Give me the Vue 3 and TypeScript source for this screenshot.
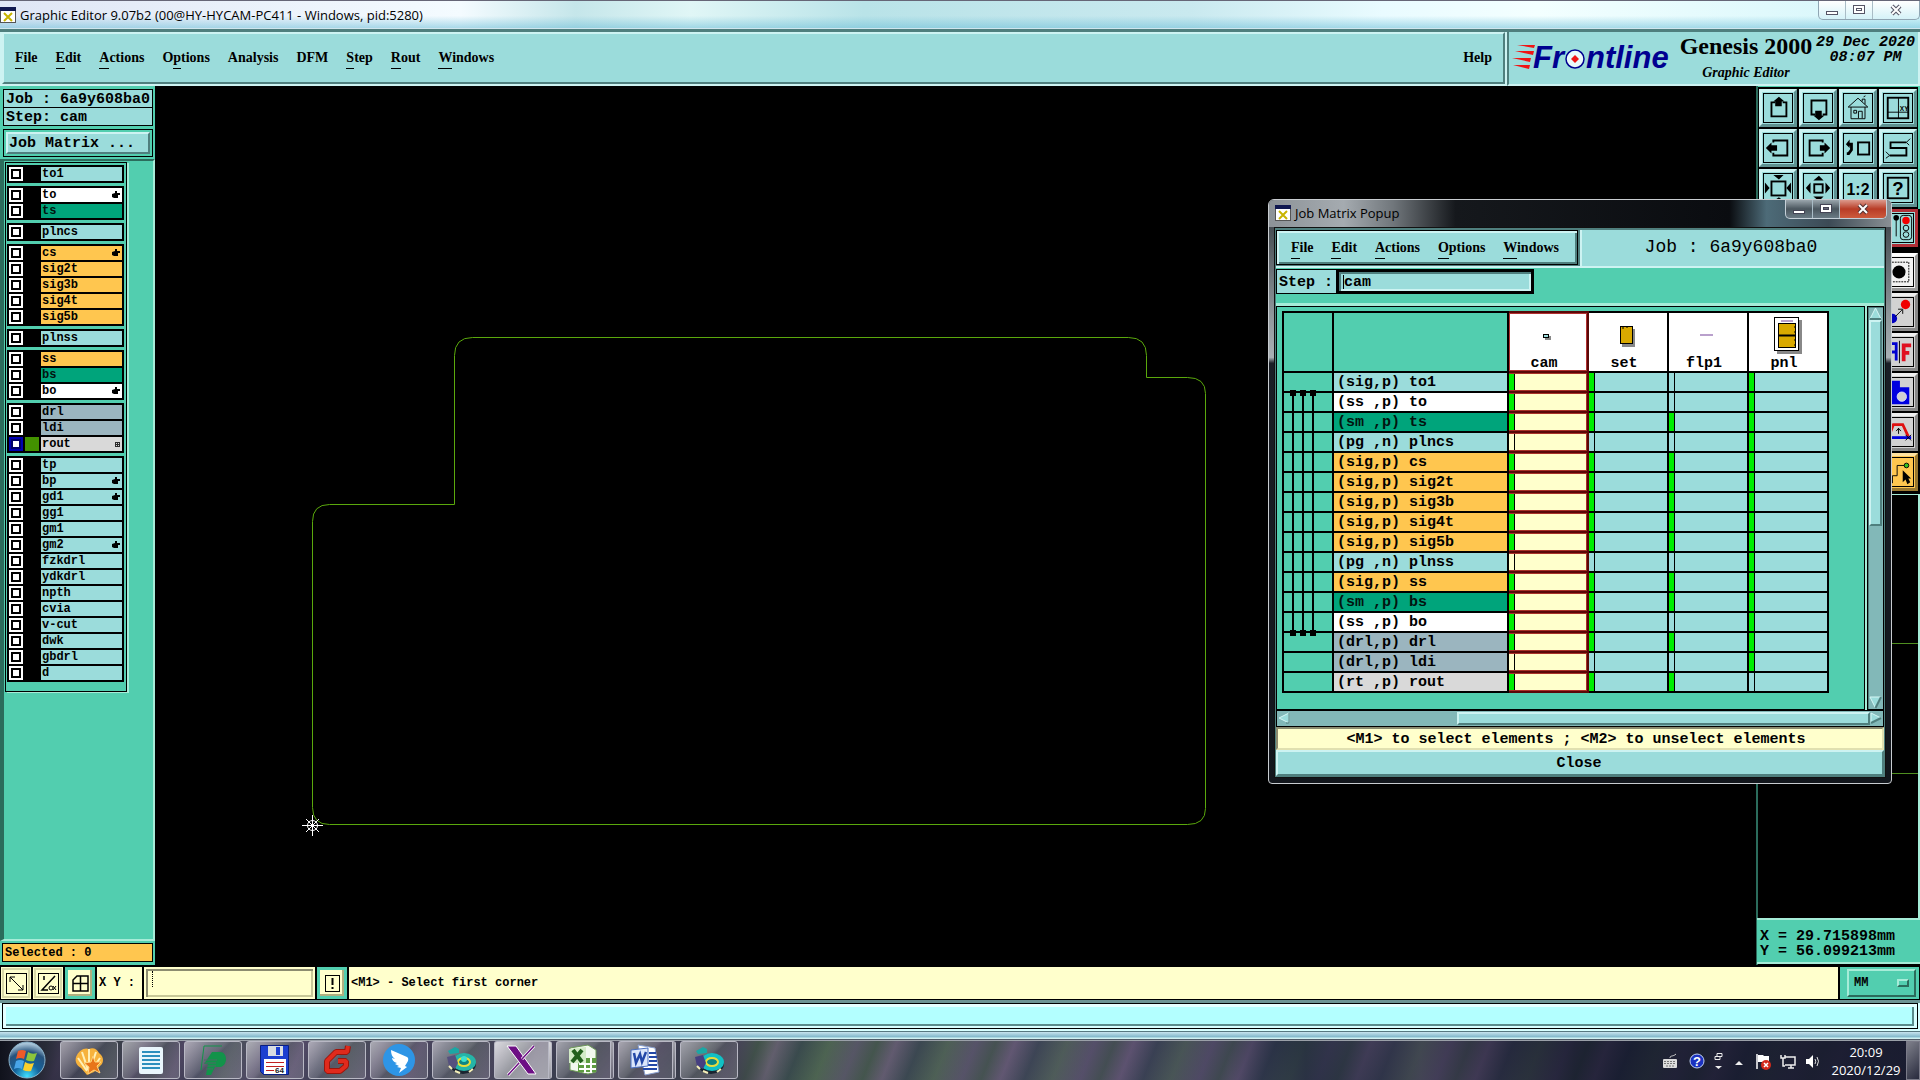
<script setup lang="ts">
import { ref } from 'vue'

interface Layer {
  name: string
  kind: string
  tone: string
  mark?: 'hand' | 'grid'
  active?: boolean
}

const menus = [
  { pre: '', key: 'F', post: 'ile' },
  { pre: '', key: 'E', post: 'dit' },
  { pre: '', key: 'A', post: 'ctions' },
  { pre: 'O', key: 'p', post: 'tions' },
  { pre: 'Analysis', key: '', post: '' },
  { pre: 'DFM', key: '', post: '' },
  { pre: '', key: 'S', post: 'tep' },
  { pre: '', key: 'R', post: 'out' },
  { pre: '', key: 'W', post: 'indows' },
]
const popupMenus = ['File', 'Edit', 'Actions', 'Options', 'Windows']

const groups: Layer[][] = [
  [{ name: 'to1', kind: 'sig,p', tone: 'cyan' }],
  [
    { name: 'to', kind: 'ss ,p', tone: 'white', mark: 'hand' },
    { name: 'ts', kind: 'sm ,p', tone: 'green' },
  ],
  [{ name: 'plncs', kind: 'pg ,n', tone: 'cyan' }],
  [
    { name: 'cs', kind: 'sig,p', tone: 'orange', mark: 'hand' },
    { name: 'sig2t', kind: 'sig,p', tone: 'orange' },
    { name: 'sig3b', kind: 'sig,p', tone: 'orange' },
    { name: 'sig4t', kind: 'sig,p', tone: 'orange' },
    { name: 'sig5b', kind: 'sig,p', tone: 'orange' },
  ],
  [{ name: 'plnss', kind: 'pg ,n', tone: 'cyan' }],
  [
    { name: 'ss', kind: 'sig,p', tone: 'orange' },
    { name: 'bs', kind: 'sm ,p', tone: 'green' },
    { name: 'bo', kind: 'ss ,p', tone: 'white', mark: 'hand' },
  ],
  [
    { name: 'drl', kind: 'drl,p', tone: 'slate' },
    { name: 'ldi', kind: 'drl,p', tone: 'slate' },
    { name: 'rout', kind: 'rt ,p', tone: 'silver', mark: 'grid', active: true },
  ],
  ['tp', 'bp', 'gd1', 'gg1', 'gm1', 'gm2', 'fzkdrl', 'ydkdrl', 'npth', 'cvia', 'v-cut', 'dwk', 'gbdrl', 'd'].map(
    (name): Layer => ({
      name,
      kind: '',
      tone: 'cyan',
      mark: ['bp', 'gd1', 'gm2'].includes(name) ? 'hand' : undefined,
    }),
  ),
]

const matrixRows = groups.slice(0, 7).flat()

const steps = [
  {
    name: 'cam',
    empty: ['plncs', 'plnss', 'ldi'],
    art: '<rect x="27" y="20" width="6" height="4" fill="#888"/><rect x="25.5" y="18.5" width="5" height="3" fill="#9bdcdb" stroke="#000"/>',
  },
  {
    name: 'set',
    empty: ['plncs', 'plnss', 'ldi'],
    art: '<rect x="24" y="13" width="13" height="18" fill="#888"/><rect x="22.500" y="10.500" width="12" height="17" fill="#d9a900" stroke="#000"/><path d="M25 10v3M29 10v2" stroke="#000"/>',
  },
  {
    name: 'flp1',
    empty: ['to1', 'to', 'plncs', 'plnss', 'bo', 'ldi'],
    art: '<rect x="22" y="18" width="13" height="2" fill="#b9a0cc"/>',
  },
  {
    name: 'pnl',
    empty: ['rout'],
    art: '<rect x="19" y="4" width="25" height="34" fill="#888"/><rect x="16.500" y="1.500" width="24" height="33" fill="#fff" stroke="#000"/><rect x="23" y="4" width="12" height="2" fill="#b9a0cc"/><rect x="20.500" y="7.500" width="17" height="24" fill="#d9a900" stroke="#000"/><path d="M20 19.500h18" stroke="#000" stroke-width="2"/><path d="M36 11h2M36 16h2M36 24h2M36 29h2" stroke="#000"/>',
  },
]

const viewTools = [
  { tip: 'Pan up', art: '<path d="M12 9H8v15h16V9h-4"/><path class="f" d="M16 3l6 5h-3v5h-7V8h-2z"/>' },
  { tip: 'Pan down', art: '<path d="M12 22H8V7h16v15h-4"/><path class="f" d="M16 28l6-5h-3v-5h-7v5h-2z"/>' },
  {
    tip: 'Home',
    art: '<g stroke-width="1"><path d="M4.500 14L15 4.500 25.500 14z M7.500 14v12.500h15V14M10.500 17.500h3v3h-3zM15.500 26V18.500h4V26M19.500 8V5.500h3V11M21 3l2-1" /></g>',
  },
  {
    tip: 'Overview',
    art: '<rect x="4" y="4" width="22" height="22"/><g stroke-width="1"><path d="M15.500 4v22M4 19.500h22"/></g><text x="17" y="18" font-size="7" class="t">XY</text>',
  },
  { tip: 'Pan left', art: '<path d="M10 9V7h15v16H10v-3"/><path class="f" d="M2 15l6-6v3h6v6H8v3z"/>' },
  { tip: 'Pan right', art: '<path d="M20 9V7H6v16h14v-3"/><path class="f" d="M28 15l-6-6v3h-5v6h5v3z"/>' },
  {
    tip: 'Previous view',
    art: '<rect x="15" y="9" width="12" height="13"/><path stroke-width="3" d="M4 11h4v6l-3 4H3"/><path class="f" d="M2 11l4-5v9z"/>',
  },
  {
    tip: 'Serpentine',
    art: '<path d="M24 9H7v6h17v8H6"/><g stroke-width="1"><path d="M28 5l-4 4 3 3M2 19l4 4-4 3"/></g>',
  },
  {
    tip: 'Zoom in',
    art: '<rect x="8" y="8" width="15" height="15"/><path class="f" d="M10 1h11l-5 5zM1 9v12l5-6zM29 9v12l-5-6zM10 29h11l-5-4z"/>',
  },
  {
    tip: 'Zoom out',
    art: '<rect x="11" y="11" width="9" height="9"/><path class="f" d="M10 7h11l-5-5zM7 9v12l-5-6zM23 9v12l5-6zM10 24h11l-5 5z"/>',
  },
  { tip: 'Scale', art: '<text x="15" y="22" font-size="17" text-anchor="middle" class="t s">1:2</text>' },
  {
    tip: 'Help',
    art: '<rect x="4" y="4" width="22" height="22"/><text x="15" y="23" font-size="20" text-anchor="middle" class="t s">?</text>',
  },
]

const sideTools = [
  {
    tip: 'Control',
    tone: 'red',
    art: '<g stroke-width="1"><rect x="16.500" y="1.500" width="12" height="26" rx="3"/><circle cx="22.500" cy="15" r="3"/><circle cx="22.500" cy="22" r="3"/><path d="M12 4v20"/></g><circle cx="22.500" cy="7" r="4" fill="#f00000" stroke="none"/><circle cx="12" cy="4" r="3" class="f"/>',
  },
  {
    tip: 'Select',
    tone: 'plain',
    art: '<g stroke-width="1" stroke-dasharray="2 1"><rect x="4.500" y="4.500" width="21" height="21"/></g><circle cx="15" cy="15" r="7" class="f"/>',
  },
  {
    tip: 'Move',
    tone: 'grey',
    art: '<circle cx="22" cy="7" r="5" fill="#f00000" stroke="none"/><circle cx="8" cy="22" r="5" fill="#0000c0" stroke="none"/><g stroke-width="1"><path d="M11 20l7-7M14 12h5v5"/></g>',
  },
  {
    tip: 'Mirror',
    tone: 'grey',
    art: '<path stroke-width="1" d="M15.500 3v24"/><path stroke="#0000d0" stroke-width="3" d="M12 24V6H4v18M4 15h8"/><path stroke="#e01020" stroke-width="4" d="M20 25V8h8M20 16h6"/>',
  },
  {
    tip: 'Merge',
    tone: 'grey',
    art: '<path fill="#0000e0" stroke="none" d="M3 3h13v7h10v18H4z"/><circle cx="18" cy="20" r="5" fill="#d0d0d0" stroke="#d8d8ff" stroke-width="1"/>',
  },
  {
    tip: 'Reroute',
    tone: 'grey',
    art: '<path stroke="#e01010" stroke-width="3" d="M4 20L9 7h10l6 13"/><path stroke="#0000e0" stroke-width="3" d="M1 21h27"/><g stroke-width="1"><path d="M14.500 17v-6M12 14l2.500-3 2.500 3M22 18l6 6M28 18l-6 6"/></g>',
  },
  {
    tip: 'Chain',
    tone: 'gold',
    art: '<g stroke-width="1"><path d="M8 27V19h5V8h10"/><circle cx="23" cy="8" r="2.500" fill="#33c020"/></g><path class="f" d="M19 13v13l3-3 2 5 3-2-2-4h3z"/>',
  },
]

const tasks = [
  {
    name: 'Shell',
    art: '<path fill="#f6b23c" d="M16 5c4-2 8 0 10 4 4 3 5 7 3 11l-8 8-7 3-6-7C3 21 1 16 4 11 6 7 11 3 16 5z"/><path stroke="#fff0b8" stroke-width="2" fill="none" d="M14 27L5 14M15 26L9 8M16 26V5M17 26l6-18M18 27l9-13"/><path fill="#e8751a" stroke="#ffd27a" d="M20 12l2 6 6 0-4 4 3 7-6-3-6 4 1-7-5-4 7-1z"/>',
  },
  {
    name: 'Notes',
    art: '<rect x="4" y="3" width="24" height="27" rx="2" fill="#e9f6fc"/><path stroke="#2c8fbe" stroke-width="2" d="M7 8h18M7 12h18M7 16h18M7 20h18M7 24h18"/>',
  },
  {
    name: 'Polar',
    art: '<path fill="none" stroke="#12934a" d="M4 26l3-24h18"/><path fill="#12934a" d="M15 8h8c8 0 8 14 0 15h-5l-4 8H9l2-11H7z"/><path stroke="#4d6a66" d="M7 16h13M7 19h12M9 22h10M9 25h7"/>',
  },
  {
    name: 'Total Commander',
    art: '<path fill="#1c3fd0" stroke="#0a1f80" d="M1.500 1.500h28v29h-25l-3-3z"/><rect x="9" y="2" width="15" height="10" fill="#d8dde2"/><rect x="17" y="3" width="4" height="8" fill="#1c3fd0"/><rect x="5" y="15" width="22" height="15" fill="#fff"/><path stroke="#c02020" d="M7 18.500h18M7 22.500h18M7 26.500h8"/><text x="16" y="29" font-size="8" font-family="Liberation Sans, sans-serif" fill="#222">64</text>',
  },
  {
    name: 'Genesis Start',
    art: '<path fill="none" stroke="#9c150c" stroke-width="6" stroke-linejoin="bevel" d="M27 2l-1 6H15L6 17v10h13l6-5v-5h-8"/><path fill="none" stroke="#e02a1c" stroke-width="4" stroke-linejoin="bevel" d="M27 2l-1 6H15L6 17v10h13l6-5v-5h-8"/>',
  },
  {
    name: 'DingTalk',
    art: '<circle cx="16" cy="16" r="16" fill="#2e95e6"/><path fill="#fff" d="M8 6l16 7c3 2 0 6-2 9l2 1-8 6 2-5-4-1 2-1-4-2 2-1c-4-1-5-4-5-5l3 1c-3-2-4-5-4-9z"/>',
  },
  {
    name: 'Genesis',
    art: '<path fill="#1ba7a5" d="M3 7l7-4 4 2v4l-9 1z"/><ellipse cx="18" cy="20" rx="13" ry="10" fill="#1a2430"/><ellipse cx="19" cy="18" rx="12" ry="9" fill="#25b5a8"/><ellipse cx="19" cy="18" rx="6" ry="4" fill="#0d8584" stroke="#e9dc3c" stroke-width="2"/><circle cx="19" cy="15" r="3" fill="#3de0d0"/><path fill="#55507e" d="M2 13l8-2 3 8-3 6-6-3z"/><path stroke="#f4efb8" stroke-width="2" fill="none" d="M4 22l3 3M10 27l5 2M24 28l4-3"/>',
  },
  {
    name: 'X server',
    stack: true,
    active: true,
    art: '<path fill="#6d0f84" stroke="#fff" d="M2 2h9l20 28h-8z"/><path stroke="#fff" stroke-width="3" d="M29 2L17 15M14 19L3 31"/><path stroke="#6d0f84" stroke-width="1.500" d="M29 2L17 15M14 19L3 31"/>',
  },
  {
    name: 'Excel',
    stack: true,
    art: '<path fill="#f2f8ee" stroke="#6d9a58" d="M3 4l18-3 8 5v22l-8 2-18-4z"/><path fill="#5e9c41" d="M15 14h14v14H11v-8z"/><path stroke="#fff" stroke-width="2" d="M12 20h17M12 25h17M18 14v15M24 14v15"/><path fill="#d3ebc6" d="M2 5l17-2v16H2z"/><path stroke="#23601c" stroke-width="4" d="M6 6l9 12M15 6L5 18"/>',
  },
  {
    name: 'Word',
    stack: true,
    art: '<path fill="#fff" stroke="#8aa0d0" d="M9 1l17 3 4 24-14 3z"/><path stroke="#2348a8" stroke-width="2" d="M20 9h7M20 13h8M20 17h8M13 21h15M14 25h14"/><path fill="#dbe6fb" stroke="#4a6fc0" d="M2 6l17-2v18L2 24z"/><path stroke="#2348a8" stroke-width="2.500" fill="none" d="M5 9l2 10 4-9 2 8 4-10"/>',
  },
  {
    name: 'Genesis 2',
    art: '<path fill="#1ba7a5" d="M3 7l7-4 4 2v4l-9 1z"/><ellipse cx="18" cy="20" rx="13" ry="10" fill="#1a2430"/><ellipse cx="19" cy="18" rx="12" ry="9" fill="#12c0c4"/><ellipse cx="19" cy="18" rx="6" ry="4" fill="#0d8584" stroke="#e9dc3c" stroke-width="2"/><path fill="#463f80" d="M2 13l8-2 3 8-3 6-6-3z"/><path stroke="#f4efb8" stroke-width="2" fill="none" d="M4 22l3 3M10 27l5 2M24 28l4-3"/>',
  },
]

const unit = ref('MM')
const xy = ref('')
const stepName = ref('cam')
</script>

<template>
  <div class="desktop">
    <header class="titlebar">
      <svg class="xicon" width="16" height="16" viewBox="0 0 16 16">
        <rect x=".5" y=".5" width="15" height="15" fill="#fff" stroke="#555" /><rect width="16" height="4" fill="#101850" />
        <path d="M4 6l8 8M12 6l-8 8" stroke="#c8b400" stroke-width="2" />
      </svg>
      <span class="caption">Graphic Editor 9.07b2 (00@HY-HYCAM-PC411 - Windows, pid:5280)</span>
      <div class="winbtns">
        <button aria-label="Minimize"><svg width="12" height="12"><rect x=".5" y="7.500" width="11" height="3" fill="#fff" stroke="#556" /></svg></button>
        <button aria-label="Maximize"><svg width="12" height="12"><rect x=".5" y="1.500" width="11" height="8" fill="#fff" stroke="#556" /><rect x="3.500" y="4.500" width="5" height="2" fill="none" stroke="#556" /></svg></button>
        <button aria-label="Close" class="wide"><svg width="12" height="12"><path d="M2 2l8 8M10 2l-8 8" stroke="#556" stroke-width="4" /><path d="M2 2l8 8M10 2l-8 8" stroke="#fff" stroke-width="2" /></svg></button>
      </div>
    </header>

    <div class="headrow">
      <nav class="menubar">
        <button v-for="m in menus" :key="m.pre + m.key + m.post" class="menu">{{ m.pre }}<u v-if="m.key">{{ m.key }}</u>{{ m.post }}</button>
        <button class="menu help">Help</button>
      </nav>
      <div class="brand">
        <svg class="logo" width="164" height="40" viewBox="0 0 164 40">
          <g fill="#f01414">
            <path d="M5 6h18l-1 3zM3 12h19l-1 4zM0 19h19l-1 4zM1 26h17l-1 4z" />
          </g>
          <g font-family="Liberation Sans, Arial, sans-serif" font-weight="bold" font-style="italic" font-size="31" fill="#000090">
            <text x="21" y="29">Fr</text><text x="74" y="29">ntline</text>
          </g>
          <circle cx="63" cy="20" r="9" fill="#eafafa" stroke="#000090" stroke-width="1.500" />
          <path d="M63 16l4 4-4 4-4-4z" fill="#f01414" />
        </svg>
        <div class="product"><strong>Genesis 2000</strong><em>Graphic Editor</em></div>
        <div class="stamp">29 Dec 2020<br />08:07 PM</div>
      </div>
    </div>

    <main class="workspace">
      <aside class="left">
        <div class="jobinfo">
          <div>Job : 6a9y608ba0</div>
          <div>Step: cam</div>
        </div>
        <div class="matrixwrap"><button class="matrixbtn">Job Matrix ...</button></div>
        <div class="layerpane">
          <div class="layerlist">
            <div v-for="(g, i) in groups" :key="i" class="group">
              <label v-for="l in g" :key="l.name" class="layer">
                <input type="checkbox" :class="{ active: l.active }" />
                <span class="swatch" :class="{ lit: l.active }"></span>
                <span class="lname" :class="l.tone">{{ l.name }}
                  <svg v-if="l.mark === 'hand'" width="8" height="8"><path d="M3 0h2v2h3v2H6v3H2L0 6V3l3-1z" /></svg>
                  <svg v-if="l.mark === 'grid'" width="5" height="5"><path d="M0 .5h5M0 2.500h5M0 4.500h5M.5 0v5M2.500 0v5M4.500 0v5" stroke="#000" stroke-width="1" opacity=".8" /></svg>
                </span>
              </label>
            </div>
          </div>
        </div>
        <div class="selected">Selected : 0</div>
      </aside>

      <section class="canvas">
        <svg width="100%" height="100%">
          <g fill="none" stroke="#5aa80c" stroke-width="1">
            <path d="M157.500 721.500V435.500Q157.500 418.500 174.500 418.500H299.500V269.500Q299.500 251.500 317.500 251.500H973.500Q991.500 251.500 991.500 269.500V291.500H1032.500Q1050.500 291.500 1050.500 307.500V722.500Q1050.500 738.500 1032.500 738.500H174.500Q157.500 738.500 157.500 721.500Z" />
          </g>
          <g fill="none" stroke="#fff"><circle cx="157.500" cy="739.500" r="5" /><path d="M147 739.500h21M157.500 729v21M151 733l13 13M164 733l-13 13" /></g>
        </svg>
      </section>

      <aside class="right">
        <div class="tools">
          <button v-for="t in viewTools" :key="t.tip" class="tool" :aria-label="t.tip"><svg width="30" height="30" viewBox="0 0 30 30" v-html="t.art"></svg></button>
        </div>
        <div class="sidetools">
          <button v-for="t in sideTools" :key="t.tip" class="tool" :class="t.tone" :aria-label="t.tip"><svg width="30" height="30" viewBox="0 0 30 30" v-html="t.art"></svg></button>
        </div>
        <div class="mini"><div class="miniview"></div></div>
        <div class="coords">X = 29.715898mm<br />Y = 56.099213mm</div>
      </aside>

      <section class="popup">
        <header class="poptitle">
          <svg class="xicon" width="16" height="16" viewBox="0 0 16 16">
            <rect x=".5" y=".5" width="15" height="15" fill="#fff" stroke="#555" /><rect width="16" height="4" fill="#101850" />
            <path d="M4 6l8 8M12 6l-8 8" stroke="#c8b400" stroke-width="2" />
          </svg>
          <span class="caption">Job Matrix Popup</span>
          <div class="winbtns dark">
            <button aria-label="Minimize"><svg width="12" height="12"><rect x=".5" y="7.500" width="11" height="3" fill="#fff" stroke="#445" /></svg></button>
            <button aria-label="Maximize"><svg width="12" height="12"><rect x=".5" y="1.500" width="11" height="8" fill="#fff" stroke="#445" /><rect x="3.500" y="4.500" width="5" height="2" fill="#667" stroke="#445" /></svg></button>
            <button aria-label="Close" class="wide close"><svg width="12" height="12"><path d="M2 2l8 8M10 2l-8 8" stroke="#533" stroke-width="4" /><path d="M2 2l8 8M10 2l-8 8" stroke="#fff" stroke-width="2" /></svg></button>
          </div>
        </header>
        <div class="client">
          <div class="pophead">
            <nav class="popmenu">
              <button v-for="m in popupMenus" :key="m" class="menu"><u>{{ m[0] }}</u>{{ m.slice(1) }}</button>
            </nav>
            <div class="popjob">Job : 6a9y608ba0</div>
          </div>
          <div class="steprow">
            <label for="step">Step :</label>
            <div class="stepbox"><i></i><input id="step" v-model="stepName" type="text" /></div>
          </div>
          <div class="scroller">
            <div class="tablearea">
              <table>
                <colgroup><col class="c1" /><col class="c2" /><col v-for="s in steps" :key="s.name" class="c3" /></colgroup>
                <thead>
                  <tr>
                    <th></th>
                    <th></th>
                    <th v-for="(s, i) in steps" :key="s.name" class="stephead" :class="{ sel: i === 0 }">
                      <svg width="60" height="40" viewBox="0 0 60 40" v-html="s.art"></svg><span>{{ s.name }}</span>
                    </th>
                  </tr>
                </thead>
                <tbody>
                  <tr v-for="r in matrixRows" :key="r.name">
                    <td></td>
                    <td class="rowname" :class="r.tone">({{ r.kind }}) {{ r.name }}</td>
                    <td v-for="(s, i) in steps" :key="s.name" :class="{ sel: i === 0 }">
                      <div class="cell"><i :class="{ on: !s.empty.includes(r.name) }"></i></div>
                    </td>
                  </tr>
                </tbody>
              </table>
              <svg class="vias" width="40" height="250">
                <path d="M7 5v240M17 5v240M27 5v240" stroke="#000" stroke-width="2" />
                <path d="M4 2h6v6H4zM14 2h6v6h-6zM24 2h6v6h-6zM4 242h6v6H4zM14 242h6v6h-6zM24 242h6v6h-6z" />
              </svg>
            </div>
            <div class="vbar">
              <svg width="13" height="13"><path d="M6.500 1L12 12H1z" fill="#9bdcdb" stroke="#d5f6f5" /><path d="M12 12H1" stroke="#4f7f7e" stroke-width="2" /></svg>
              <div class="vthumb"></div>
              <svg width="13" height="13"><path d="M6.500 12L12 1H1z" fill="#9bdcdb" stroke="#d5f6f5" /><path d="M12 1L6.500 12" stroke="#4f7f7e" stroke-width="2" /></svg>
            </div>
          </div>
          <div class="hbar">
            <svg width="12" height="12"><path d="M1 6L11 1v10z" fill="#9bdcdb" stroke="#d5f6f5" /><path d="M11 1v10H8" fill="none" stroke="#4f7f7e" /></svg>
            <div class="hthumb"></div>
            <svg width="12" height="12"><path d="M11 6L1 1v10z" fill="#9bdcdb" stroke="#d5f6f5" /><path d="M11 6L1 11" stroke="#4f7f7e" stroke-width="2" /></svg>
          </div>
          <div class="hint">&lt;M1&gt; to select elements ; &lt;M2&gt; to unselect elements</div>
          <button class="closebtn">Close</button>
        </div>
      </section>
    </main>

    <div class="command">
      <button class="cbtn" aria-label="Line"><svg width="21" height="21"><rect x=".5" y=".5" width="20" height="20" fill="none" stroke="#000" /><path d="M4 9V4h5M4 4l13 13M17 12v5h-5" fill="none" stroke="#000" /></svg></button>
      <button class="cbtn" aria-label="Angle"><svg width="21" height="21"><rect x=".5" y=".5" width="20" height="20" fill="none" stroke="#000" /><path d="M17 3L4 17h6M6 3v4" fill="none" stroke="#000" stroke-width="1.500" /><circle cx="13" cy="15" r="2" fill="none" stroke="#000" /><path d="M15 13l3 4M18 13l-3 4" stroke="#000" /></svg></button>
      <button class="cbtn boxed" aria-label="Grid"><svg width="17" height="17"><path d="M5 1h11v15H1V5zM8.500 1v15M1 8.500h15" fill="none" stroke="#000" stroke-width="1.500" /></svg></button>
      <label for="xy" class="xylabel">X Y :</label>
      <div class="xybox"><i></i><input id="xy" v-model="xy" type="text" /></div>
      <button class="cbtn boxed" aria-label="Alert"><svg width="17" height="17"><rect x="1.500" y=".5" width="14" height="16" fill="none" stroke="#000" /><path d="M8.500 3v7M8.500 12v2" stroke="#000" stroke-width="2" /></svg></button>
      <div class="prompt">&lt;M1&gt; - Select first corner</div>
      <div class="units">
        <select v-model="unit" aria-label="Units"><option>MM</option><option>INCH</option></select>
        <b></b>
      </div>
    </div>
    <div class="status"><div></div></div>
    <div class="aero"></div>

    <footer class="taskbar">
      <button class="start" aria-label="Start">
        <svg width="38" height="38" viewBox="0 0 38 38">
          <defs>
            <radialGradient id="orb" cx=".5" cy=".95" r=".9"><stop offset="0" stop-color="#3fe0ff" /><stop offset=".4" stop-color="#14639c" /><stop offset=".75" stop-color="#27527c" /><stop offset="1" stop-color="#a8c4d8" /></radialGradient>
          </defs>
          <circle cx="19" cy="19" r="18" fill="url(#orb)" stroke="#8ab4cc" />
          <path d="M10 10q4-2 8 0l-2 8q-4-2-8 0z" fill="#ee5a28" /><path d="M20 11q4 3 9 1l-3 8q-4 1-8-1z" fill="#8cc63c" />
          <path d="M8 20q4-2 8 0l-2 8q-4-2-8 0z" fill="#48a5e8" /><path d="M17 21q4 3 9 1l-3 8q-4 1-8-1z" fill="#fcd02c" />
        </svg>
      </button>
      <div class="tasks">
        <button v-for="t in tasks" :key="t.name" class="task" :class="{ active: t.active, stack: t.stack }" :aria-label="t.name">
          <svg width="32" height="32" viewBox="0 0 32 32" v-html="t.art"></svg>
        </button>
      </div>
      <div class="tray">
        <svg width="16" height="16"><path d="M8 5c0-3 3-1 6-4" fill="none" stroke="#ccc" /><rect x="1" y="6" width="14" height="9" rx="1" fill="#ddd" /><path d="M2 8.500h12M2 10.500h12M4 13h8" stroke="#777" stroke-dasharray="2 1" /></svg>
        <svg width="16" height="16"><circle cx="8" cy="8" r="7" fill="#1b32c0" stroke="#c0d0f0" /><text x="8" y="13" text-anchor="middle" fill="#fff" font-size="13" font-weight="bold" font-family="Liberation Sans, sans-serif">?</text></svg>
        <svg width="9" height="18"><path d="M3 1.500h5v3H3zM1 4.500h5v3H1z" fill="none" stroke="#eee" /><path d="M1 14h7l-3.500 3z" fill="#eee" /></svg>
        <svg class="up" width="8" height="16"><path d="M0 12h8l-4-4z" fill="#eee" /></svg>
        <svg width="16" height="18"><path d="M2 2v15" stroke="#fff" stroke-width="1.500" /><path d="M3 3h5l1 1h5v6H3z" fill="#fff" /><circle cx="11" cy="13" r="5" fill="#d42a1c" /><path d="M9 11l4 4M13 11l-4 4" stroke="#fff" stroke-width="1.500" /></svg>
        <svg width="16" height="16"><path d="M5 4h10v8H5M8 15h6M11 12v3M1 2v3h4V2M3 5v8h2" fill="none" stroke="#eee" stroke-width="1.500" /></svg>
        <svg width="16" height="16"><path d="M1 6h3l4-4v13l-4-4H1z" fill="#fff" /><path d="M10 6q1.500 2 0 5M12 4q3 4 0 9" fill="none" stroke="#ddd" /></svg>
        <div class="clock">20:09<br />2020/12/29</div>
        <button class="peek" aria-label="Show desktop"></button>
      </div>
    </footer>
  </div>
</template>

<style>
body {
  margin: 0;
  background: #000;
}
</style>

<style scoped>
* {
  box-sizing: border-box;
}
svg {
  display: block;
  flex: none;
}
button,
input,
select {
  font: inherit;
  color: inherit;
  margin: 0;
  padding: 0;
  border: 0;
  border-radius: 0;
  background: none;
}
.desktop {
  --cyan: #9bdcdb;
  --hi: #cdf3f2;
  --lo: #4f7f7e;
  --teal: #52ceaf;
  --tealhi: #a6ecd8;
  --teallo: #2b6c5c;
  display: flex;
  flex-direction: column;
  min-height: 100vh;
  color: #000;
  font-family: 'Liberation Mono', 'Courier New', monospace;
  font-weight: bold;
  font-size: 15px;
  line-height: 15px;
}
.titlebar {
  display: flex;
  align-items: center;
  height: 29px;
  border-top: 1px solid #667;
  border-bottom: 1px solid #cfe6ee;
  background: linear-gradient(#fff0 55%, #6fbfd890), linear-gradient(90deg, #dfe6f5, #f4fbff 24%, #c5e6ea 30%, #e0f6f6 36%, #b9e3e8 45%, #c9e9ef 62%, #e9fbff 72%, #f3ffff 80%, #d3f5fa);
}
.caption {
  margin-left: 4px;
  font: 13px/16px 'Open Sans', 'Noto Sans', sans-serif;
  white-space: nowrap;
}
.winbtns {
  display: flex;
  align-self: flex-start;
  margin-left: auto;
  height: 19px;
  border: 1px solid #8fa5b3;
  border-top: 0;
  border-radius: 0 0 5px 5px;
  background: linear-gradient(#fff, #d5f2f8);
}
.winbtns button {
  display: flex;
  align-items: center;
  justify-content: center;
  width: 27px;
  border-right: 1px solid #a9bcc6;
}
.winbtns .wide {
  width: 46px;
  border-right: 0;
}
.headrow {
  display: flex;
  height: 57px;
  border-top: 3px solid var(--lo);
  background: var(--hi);
}
.menubar {
  display: flex;
  flex: 1;
  align-items: center;
  gap: 18px;
  margin: 0 2px 2px;
  padding: 0 11px 2px;
  border: 2px solid var(--lo);
  border-color: var(--hi) var(--lo) var(--lo) var(--hi);
  background: var(--cyan);
  font: bold 14px/17px 'Liberation Serif', 'Times New Roman', serif;
}
.menu u {
  text-decoration: none;
  border-bottom: 1px solid #000;
  padding-bottom: 3px;
}
.menu {
  white-space: nowrap;
}
.help {
  margin-left: auto;
}
.brand {
  display: flex;
  width: 413px;
  padding: 0 3px 0 3px;
  border-left: 2px solid var(--lo);
  border-bottom: 2px solid var(--hi);
  border-right: 2px solid var(--hi);
  background: var(--cyan);
}
.logo {
  margin-top: 7px;
}
.product {
  display: flex;
  flex: 1;
  flex-direction: column;
  align-items: center;
  white-space: nowrap;
  font-family: 'Liberation Serif', 'Times New Roman', serif;
}
.product strong {
  font-size: 24px;
  line-height: 29px;
}
.product em {
  font-size: 14px;
  line-height: 23px;
}
.stamp {
  width: 99px;
  padding-top: 3px;
  font-style: italic;
  text-align: center;
  white-space: nowrap;
}
.workspace {
  position: relative;
  display: flex;
  flex: 1;
  background: #000;
}
.left {
  display: flex;
  flex-direction: column;
  width: 155px;
  padding: 3px 0 0;
  background: var(--teal);
}
.jobinfo {
  margin: 0 2px 0 3px;
  border: 1px solid #000;
  border-top-width: 0;
}
.jobinfo div {
  padding: 0 2px;
  height: 18px;
  line-height: 19px;
  border-top: 1px solid #000;
  background: var(--cyan);
  white-space: nowrap;
}
.matrixwrap {
  margin: 3px 2px 2px 3px;
  padding: 2px;
  border: 1px solid #000;
}
.matrixbtn {
  display: block;
  width: 100%;
  height: 22px;
  padding-left: 1px;
  border: 2px solid;
  border-color: var(--hi) var(--lo) var(--lo) var(--hi);
  background: var(--cyan);
  text-align: left;
}
.layerpane {
  flex: 1;
  padding: 1px 0 0 1px;
  border: 2px solid;
  border-left-width: 4px;
  border-color: var(--teallo) var(--tealhi) var(--tealhi) var(--teallo);
}
.layerlist {
  display: flex;
  flex-direction: column;
  gap: 3px;
  width: 122px;
  padding: 2px 2px 9px 1px;
  border: 1px solid #000;
  box-shadow: 2px 1px 0 var(--tealhi);
}
.group {
  width: 117px;
  padding: 2px 2px 0;
  background: #000;
}
.layer {
  display: flex;
  height: 14px;
  margin-bottom: 2px;
}
.layer input {
  appearance: none;
  width: 14px;
  height: 14px;
  border: 2px solid #fff;
  background: #fff;
  box-shadow: inset 0 0 0 2px #000;
}
.layer input.active {
  border-color: #0000b0;
  box-shadow: inset 0 0 0 2px #000068;
}
.swatch {
  width: 14px;
  margin: 0 2px;
}
.swatch.lit {
  background: #439200;
}
.lname {
  display: flex;
  flex: 1;
  align-items: center;
  justify-content: space-between;
  padding: 0 2px 0 1px;
  font-size: 12px;
  line-height: 14px;
}
.cyan {
  background: var(--cyan);
}
.white {
  background: #fff;
}
.green {
  background: #00a47b;
  color: #02140f;
}
.orange {
  background: #ffc64f;
}
.slate {
  background: #9bb5bf;
}
.silver {
  background: #d9d9d9;
}
.selected {
  height: 19px;
  margin: 2px 2px 3px;
  padding-left: 2px;
  border: 1px solid #000;
  background: #ffc64f;
  font-size: 12px;
  line-height: 18px;
}
.canvas {
  position: relative;
  flex: 1;
  min-width: 0;
}
.canvas svg {
  position: absolute;
  inset: 0;
}
.right {
  display: flex;
  flex-direction: column;
  width: 164px;
  border-left: 2px solid var(--teallo);
}
.tools {
  display: flex;
  flex-wrap: wrap;
  gap: 2px;
  padding: 2px 0 2px 1px;
  border-right: 2px solid var(--teal);
  border-top: 1px solid var(--teal);
}
.tool {
  display: flex;
  align-items: center;
  justify-content: center;
  width: 38px;
  height: 38px;
  border: 3px solid;
  border-color: var(--hi) #5f9291 #5f9291 var(--hi);
  background: var(--cyan);
}
.tool svg {
  border: 1px solid #000;
  fill: none;
  stroke: #000;
  stroke-width: 2;
}
.tool :deep(.f) {
  fill: #000;
  stroke: none;
}
.tool :deep(.t) {
  fill: #000;
  stroke: none;
  font-family: 'Liberation Sans', Arial, sans-serif;
}
.sidetools {
  display: flex;
  flex-direction: column;
  align-items: flex-end;
  gap: 2px;
  padding: 0 2px 3px 0;
  border-bottom: 1px solid var(--tealhi);
}
.tool.red {
  border-color: #b03038;
  margin-bottom: 4px;
}
.tool.plain {
  background: #f2f2f2;
  border-color: #fff #999 #999 #fff;
}
.tool.grey {
  background: #d2d2d2;
  border-color: #efefef #888 #888 #efefef;
}
.tool.gold {
  background: #ffc64f;
  border-color: #ffe2a0 #9a7830 #9a7830 #ffe2a0;
}
.mini {
  display: flex;
  flex: 1;
  align-items: flex-start;
  padding-top: 148px;
  border-right: 2px solid var(--tealhi);
}
.miniview {
  flex: 1;
  height: 131px;
  border: 1px solid #4f8f20;
  border-width: 1px 0;
}
.coords {
  height: 46px;
  margin: 0 0 1px -1px;
  padding: 9px 4px 0 3px;
  border-top: 2px solid var(--tealhi);
  border-bottom: 2px solid var(--tealhi);
  background: var(--teal);
  white-space: nowrap;
}
.popup {
  position: absolute;
  top: 113px;
  right: 28px;
  width: 624px;
  padding: 0 5px 5px;
  border: 1px solid #c8ccd0;
  border-radius: 6px 6px 4px 4px;
  background: linear-gradient(#30363c, #90989c 20%, #a9b0b4 27%, #1a1f26 28%, #12161c);
}
.poptitle {
  display: flex;
  height: 27px;
  padding-top: 5px;
  margin: 0 -5px;
  padding-left: 6px;
  padding-right: 4px;
  border-radius: 5px 5px 0 0;
  background: linear-gradient(90deg, #8c9297, #a5abb0 12%, #70767b 20%, #15181c 30%, #0a0c10 74%, #4d6b78 80%, #3c4a55 90%, #8a9094);
}
.poptitle .winbtns {
  margin-top: -5px;
  border-color: #c5d0d8;
  background: linear-gradient(#9aa6ad, #4a565e 50%, #6a7a84);
}
.poptitle .close {
  background: linear-gradient(#dc9a8c, #b83c26 50%, #cd5a3c);
  border-radius: 0 0 4px 0;
}
.client {
  display: flex;
  flex-direction: column;
  padding: 2px 1px 1px;
  border: 1px solid #111;
  background: var(--lo);
}
.pophead {
  display: flex;
  height: 38px;
  gap: 2px;
  border-bottom: 2px solid var(--hi);
}
.popmenu {
  display: flex;
  align-items: center;
  justify-content: space-between;
  width: 302px;
  margin: 0 0 1px;
  padding: 0 18px 0 14px;
  border: 1px solid #000;
  box-shadow: inset 2px 2px 0 var(--hi), inset -2px -2px 0 var(--lo);
  background: var(--cyan);
  font: bold 14px/17px 'Liberation Serif', 'Times New Roman', serif;
}
.popjob {
  flex: 1;
  padding-right: 4px;
  background: var(--cyan);
  border-left: 2px solid var(--hi);
  font-size: 18px;
  line-height: 34px;
  text-align: center;
  font-weight: normal;
}
.steprow {
  display: flex;
  align-items: flex-start;
  height: 37px;
  padding-top: 1px;
  border-bottom: 2px solid var(--tealhi);
  background: var(--teal);
}
.steprow label {
  width: 60px;
  height: 25px;
  padding-left: 2px;
  border: 1px solid #000;
  border-right: 0;
  background: var(--cyan);
  line-height: 25px;
}
.stepbox {
  display: flex;
  align-items: center;
  width: 198px;
  height: 25px;
  padding: 1px 4px 0;
  border: 3px solid #000;
  background: var(--cyan);
  box-shadow: inset 2px 2px 0 var(--lo), inset -2px -2px 0 var(--hi);
}
.stepbox i {
  width: 1px;
  height: 14px;
  background: #000;
}
.stepbox input {
  flex: 1;
  min-width: 0;
  outline: 0;
}
.scroller {
  display: flex;
  height: 405px;
  padding-top: 1px;
  gap: 2px;
  background: var(--tealhi);
}
.tablearea {
  position: relative;
  flex: 1;
  padding: 4px 0 0 5px;
  border: 1px solid #000;
  background: var(--teal);
}
table {
  table-layout: fixed;
  width: 547px;
  border-collapse: collapse;
}
.c1 {
  width: 50px;
}
.c2 {
  width: 175px;
}
.c3 {
  width: 80px;
}
th,
td {
  height: 20px;
  padding: 0;
  border: 2px solid #000;
}
th {
  height: 60px;
}
.stephead {
  background: #fff;
}
.stephead svg {
  margin: 3px auto 0;
}
.stephead span {
  display: block;
  margin-right: 8px;
  line-height: 15px;
}
.rowname {
  padding: 2px 0 0 3px;
  font-size: 15px;
  line-height: 16px;
  white-space: pre;
}
.cell {
  height: 18px;
  background: var(--cyan);
}
.cell i {
  display: block;
  width: 6px;
  height: 18px;
  border-right: 1px solid #000;
}
.cell i.on {
  background: #00ee00;
}
.sel {
  border-color: #5a0808;
  box-shadow: inset 0 0 0 1px #b03030;
}
.sel .cell {
  border: 1px solid #a83028;
  border-left: 0;
  background: #ffffcc;
}
.sel .cell i {
  height: 16px;
}
.vias {
  position: absolute;
  top: 81px;
  left: 9px;
}
.vbar {
  display: flex;
  flex-direction: column;
  width: 17px;
  padding: 0 1px;
  border: 1px solid #000;
  box-shadow: inset 1px 1px 0 var(--lo);
  background: #82b8b8;
}
.vthumb {
  height: 206px;
  margin-bottom: auto;
  border: 2px solid;
  border-color: var(--hi) var(--lo) var(--lo) var(--hi);
  background: var(--cyan);
}
.hbar {
  display: flex;
  height: 17px;
  padding: 1px;
  border: 1px solid #000;
  background: #82b8b8;
}
.hthumb {
  flex: 1;
  margin-left: 167px;
  border: 2px solid;
  border-color: var(--hi) var(--lo) var(--lo) var(--hi);
  background: var(--cyan);
}
.hint {
  height: 23px;
  border: 2px solid;
  border-color: #8c8c70 #e0e0b0 #e0e0b0 #8c8c70;
  background: #ffffcc;
  line-height: 21px;
  text-align: center;
  padding-right: 8px;
}
.closebtn {
  height: 26px;
  padding: 1px 2px 0 0;
  border: 2px solid;
  border-color: var(--hi) var(--lo) var(--lo) var(--hi);
  background: var(--cyan);
}
.command {
  display: flex;
  height: 35px;
  gap: 2px;
  padding: 2px 0 1px 1px;
  background: #000;
  font-size: 12px;
}
.cbtn {
  display: flex;
  align-items: center;
  justify-content: center;
  width: 30px;
  background: #ffffcc;
  box-shadow: inset 0 0 0 1px #ffffcc, inset 0 0 0 3px #d8d8a8;
}
.cbtn.boxed {
  box-shadow: inset 0 0 0 3px var(--teal), inset -5px -5px 0 #b0b080;
}
.xylabel,
.prompt {
  padding-left: 2px;
  background: #ffffcc;
  line-height: 33px;
  white-space: pre;
}
.xylabel {
  width: 45px;
}
.xybox {
  display: flex;
  width: 171px;
  padding: 2px 6px 4px;
  border: 2px solid #ffffcc;
  background: #ffffcc;
  box-shadow: inset 2px 2px 0 #8c8c70, inset -2px -2px 0 #c8c898;
}
.xybox i {
  width: 1px;
  height: 16px;
  border-left: 1px dotted #000;
}
.xybox input {
  flex: 1;
  min-width: 0;
  outline: 0;
}
.prompt {
  flex: 1;
}
.units {
  position: relative;
  width: 80px;
  padding: 2px 3px 2px 7px;
  border-right: 1px solid #000;
  background: var(--teal);
}
.units select {
  appearance: none;
  width: 69px;
  height: 28px;
  padding-left: 5px;
  border: 2px solid;
  border-color: var(--tealhi) var(--teallo) var(--teallo) var(--tealhi);
}
.units b {
  position: absolute;
  right: 10px;
  top: 12px;
  width: 12px;
  height: 8px;
  border: 2px solid;
  border-color: var(--tealhi) var(--teallo) var(--teallo) var(--tealhi);
  pointer-events: none;
}
.status {
  height: 32px;
  padding: 0 2px 2px;
  border-top: 3px solid #6d9494;
  border-bottom: 1px solid #57777f;
  background: #d8ffff;
}
.status div {
  height: 26px;
  border: 1px solid #000;
  box-shadow: inset 3px 3px 0 #e4ffff, inset -3px -2px 0 #d8ffff, inset -5px -4px 0 #5a8c8c;
  background: #b3ffff;
}
.aero {
  height: 8px;
  background: linear-gradient(#c8e4ee, #83b8ca 60%, #dff 80%, #112);
}
.taskbar {
  display: flex;
  height: 40px;
  border-top: 1px solid #9aa0a8;
  background:
    linear-gradient(90deg, #10121c 0, #2a2a3ccc 3%, #4a4660aa 12%, #3a3a4acc 38%, #4d644f66 40%, #51506477 55%, #40405888 64%, #20283ccc 68%, #3b3850aa 74%, #15182ccc 82%, #1a1c30 100%),
    repeating-linear-gradient(112deg, #4c6650 0, #5b5070 26px, #3c5046 44px, #6f5a80 62px, #2c3a4a 84px, #4c6650 110px);
}
.start {
  display: flex;
  justify-content: center;
  width: 54px;
}
.tasks {
  display: flex;
  flex: 1;
  gap: 4px;
  padding-left: 6px;
}
.task {
  display: flex;
  align-items: center;
  justify-content: center;
  width: 58px;
  height: 38px;
  border: 1px solid #b8b8c4;
  border-radius: 3px;
  background: linear-gradient(135deg, #ffffff88, #ffffff30 45%, #ffffff18 50%, #ffffff28);
}
.task.active {
  background: linear-gradient(135deg, #fffc, #ffffff70 50%, #ffffff88);
}
.task.stack {
  padding-right: 2px;
  border-right: 4px double #b8b8c4;
}
.tray {
  display: flex;
  align-items: center;
  gap: 9px;
  color: #fff;
}
.tray svg:first-child {
  margin-right: 2px;
}
.up {
  margin: 0 3px;
}
.clock {
  width: 72px;
  font: 13px/18px 'Open Sans', 'Noto Sans', sans-serif;
  text-align: center;
  white-space: nowrap;
}
.peek {
  width: 14px;
  height: 39px;
  margin-left: -5px;
  border: 1px solid #7a7a88;
  background: linear-gradient(135deg, #ffffff70, #ffffff10);
}
</style>
